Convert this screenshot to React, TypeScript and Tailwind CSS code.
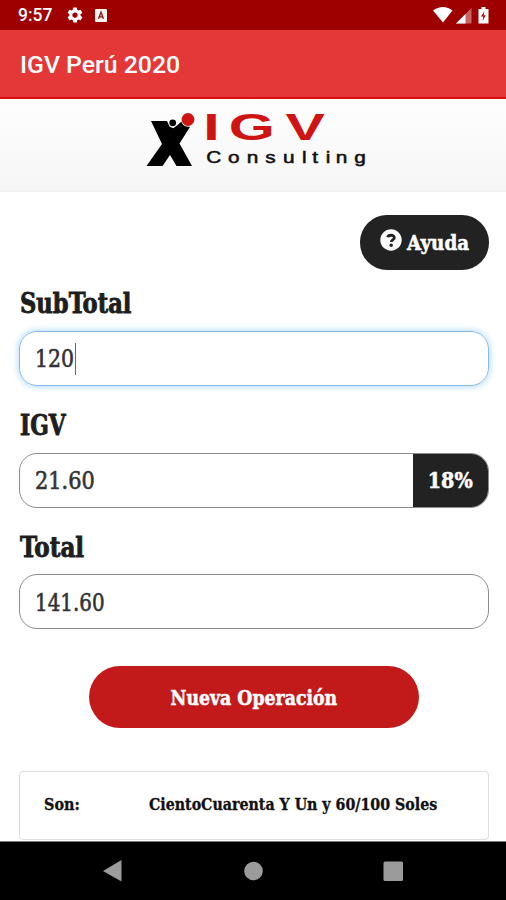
import type { ReactNode } from 'react';

const SLAB = "font-['DejaVu_Serif_Condensed','DejaVu_Serif',serif] [font-stretch:condensed]";

function StatusBar() {
  return (
    <div className="flex h-[30px] items-center bg-[#9e0000] pl-[18px] pr-[16px] text-white">
      <span className="w-[48px] whitespace-nowrap pt-[2px] font-['Roboto',sans-serif] text-[17.5px] font-medium leading-none [font-stretch:normal]">
        9:57
      </span>
      <svg className="size-[18px]" viewBox="0 0 24 24" fill="currentColor">
        <path d="M19.4 13a7.5 7.5 0 0 0 0-2l2.1-1.7c.2-.1.2-.4.1-.6l-2-3.5a.5.5 0 0 0-.6-.2l-2.5 1a7 7 0 0 0-1.7-1l-.4-2.6a.5.5 0 0 0-.5-.4h-4a.5.5 0 0 0-.5.4L9.100 5a7 7 0 0 0-1.700 1l-2.500-1a.5.5 0 0 0-.6.2l-2 3.500c-.1.200-.1.500.1.600L4.500 11a7.500 7.500 0 0 0 0 2l-2.100 1.700c-.2.100-.2.400-.1.600l2 3.500c.1.200.4.300.6.200l2.500-1a7 7 0 0 0 1.700 1l.4 2.600c0 .2.200.4.500.4h4c.2 0 .5-.2.500-.4l.4-2.600a7 7 0 0 0 1.700-1l2.500 1c.2.100.5 0 .6-.2l2-3.500c.1-.2.100-.5-.1-.6zM12 15.500a3.500 3.500 0 1 1 0-7 3.500 3.500 0 0 1 0 7z" />
      </svg>
      <svg className="ml-[11px] mt-px h-[13px] w-[12px]" viewBox="0 0 12 13">
        <rect width="12" height="13" rx="1" fill="#fff4f0" />
        <path d="M3.500 9.800 6 3.200l2.500 6.600M4.500 7.800h3" fill="none" stroke="#8e1010" strokeWidth="1.300" />
      </svg>
      <svg className="ml-auto h-[18px] w-[58px]" viewBox="0 0 58 18">
        <path d="M1 4.500C7-.2 15-.2 20.500 4.500L11 16.500z" fill="#fff" />
        <path d="M39.500 2v15.500H24z" fill="#fff" opacity=".4" />
        <path d="M33.500 8v9.500H24z" fill="#fff" />
        <path d="M46.500 3h3V1h4v2h3v14.500h-10z" fill="#fff" />
        <path d="M52.500 5 49 10.500h2.300L50.500 15l3.200-5.700h-2.200z" fill="#9e0000" />
      </svg>
    </div>
  );
}

function Logo() {
  return (
    <svg className="h-[60px] w-[230px] overflow-visible" viewBox="142 109 230 60">
      <path d="M151 121h16l2.500 5.500 3.700 1.700 3.800-2.700 4.500-4 8.500 5.500-10.500 16.500 12.500 22.500H176.500l-6.500-11-7.500 11H146.500l15.500-22z" fill="#000" />
      <circle cx="172.700" cy="122.800" r="3.400" fill="#000" />
      <circle cx="188" cy="119.700" r="7" fill="#fafafa" />
      <circle cx="188" cy="119.500" r="6.400" fill="#cf1414" />
      <text
        transform="scale(1.6 1)"
        x="127 142.900 178.500"
        y="139.700"
        fontSize="37"
        fontWeight="700"
        fontFamily="Liberation Sans, Arial, sans-serif"
        fill="#cf1414"
      >
        IGV
      </text>
      <text
        transform="scale(1.3 1)"
        x="158.700 175.300 189.900 204 217.600 232.400 240.300 250.500 258.300 272.500"
        y="163"
        fontSize="16"
        fontWeight="400"
        fontFamily="Liberation Sans, Arial, sans-serif"
        fill="#111"
        stroke="#111"
        strokeWidth=".5"
      >
        Consulting
      </text>
    </svg>
  );
}

function Label({ className, children }: { className: string; children: ReactNode }) {
  return (
    <label className="flex items-center pl-px text-[27.5px] font-bold leading-none text-[#1e1e1e] [-webkit-text-stroke:0.8px_#1e1e1e]">
      <span className={`inline-block origin-left ${className}`}>{children}</span>
    </label>
  );
}

function Value({ className, children }: { className: string; children: ReactNode }) {
  return (
    <span
      className={`inline-block origin-left whitespace-nowrap text-[25px] leading-none text-[#333] [-webkit-text-stroke:0.6px_#333] ${className}`}
    >
      {children}
    </span>
  );
}

export default function App() {
  return (
    <div className={`flex h-[900px] w-[506px] flex-col overflow-hidden bg-white ${SLAB}`}>
      <StatusBar />
      <header className="flex h-[69px] items-center border-b-2 border-[#d91010] bg-[#e43838] pl-[20px] pt-[4px]">
        <h1 className="whitespace-nowrap font-['Roboto',sans-serif] text-[24.8px] font-medium leading-none text-white [font-stretch:normal]">
          IGV Perú 2020
        </h1>
      </header>
      <div className="flex h-[93px] shrink-0 justify-center border-b-2 border-[#f2f2f2] bg-linear-to-b from-[#fefefe] to-[#f6f6f6] pl-[8px] pt-[10px]">
        <Logo />
      </div>

      <main className="flex flex-col pl-[19px] pr-[17px] pt-[23px]">
        <button className="flex h-[55px] w-[129px] items-center self-end rounded-[27px] bg-[#222] pl-[20px] text-white">
          <svg className="mb-[5px] size-[22px] shrink-0" viewBox="0 0 22 22">
            <circle cx="11" cy="11" r="10.700" fill="#fff" />
            <path d="M7.700 8.200C8.200 5.800 14.300 5.200 14.300 8.700c0 2.300-3 2.200-3 4.300" fill="none" stroke="#222" strokeWidth="2.800" />
            <circle cx="11.200" cy="16.200" r="1.700" fill="#222" />
          </svg>
          <span className="ml-[5px] inline-block origin-left scale-x-[0.97] whitespace-nowrap text-[21px] font-bold leading-none [-webkit-text-stroke:0.5px_#fff]">
            Ayuda
          </span>
        </button>

        <div className="grid h-[61px] pt-[7px]">
          <Label className="scale-x-[0.915]">SubTotal</Label>
        </div>
        <div className="flex h-[55px] w-[470px] items-center rounded-[18px] border-[1.500px] border-[#86b9ea] pl-[15px] shadow-[0_0_6px_1px_#b5dcf8]">
          <Value className="w-[40px] scale-x-[0.91]">120</Value>
          <i className="h-[32px] w-px bg-[#666]" />
        </div>

        <div className="grid h-[67px] pt-[13px]">
          <Label className="scale-x-[0.88]">IGV</Label>
        </div>
        <div className="flex h-[55px] w-[470px] items-center overflow-hidden rounded-[18px] border border-[#8c8c8c] pl-[15px]">
          <Value className="scale-x-[0.93]">21.60</Value>
          <span className="ml-auto flex h-[55px] w-[75px] shrink-0 items-center justify-center bg-[#222] text-[23px] font-bold text-white">
            <span className="inline-block scale-x-[0.93] [-webkit-text-stroke:0.5px_#fff]">18%</span>
          </span>
        </div>

        <div className="grid h-[66px] pt-[13px]">
          <Label className="scale-x-[0.935]">Total</Label>
        </div>
        <div className="flex h-[55px] w-[470px] items-center rounded-[18px] border border-[#8c8c8c] pl-[15px] pt-px">
          <Value className="scale-x-[0.885]">141.60</Value>
        </div>

        <button className="ml-[70px] mt-[37px] flex h-[62px] w-[330px] items-center justify-center rounded-full bg-[#c21a1a] text-white">
          <span className="inline-block scale-x-[0.917] whitespace-nowrap text-[21px] font-bold leading-none [-webkit-text-stroke:0.5px_#fff]">
            Nueva Operación
          </span>
        </button>

        <section className="mt-[43px] flex h-[69px] w-[470px] shrink-0 items-center rounded-[4px] border border-[#ddd] pb-[2px] pl-[24px] text-[17px] font-bold leading-none text-[#111] [-webkit-text-stroke:0.3px_#111]">
          <span className="w-[105px] origin-left">
            <span className="inline-block origin-left scale-x-[0.94]">Son:</span>
          </span>
          <span className="inline-block origin-left scale-x-[0.929] whitespace-nowrap">
            CientoCuarenta Y Un y 60/100 Soles
          </span>
        </section>
      </main>

      <nav className="mt-auto h-[59px] shrink-0 border-t border-[#777] bg-black">
        <svg className="h-[58px] w-[506px]" viewBox="0 0 506 58" fill="#9b9b9b">
          <path d="M103 29 121.500 18v21.500z" />
          <circle cx="253.500" cy="29" r="9.300" />
          <rect x="383.500" y="19.500" width="19.500" height="19.500" rx="1.500" />
        </svg>
      </nav>
    </div>
  );
}
